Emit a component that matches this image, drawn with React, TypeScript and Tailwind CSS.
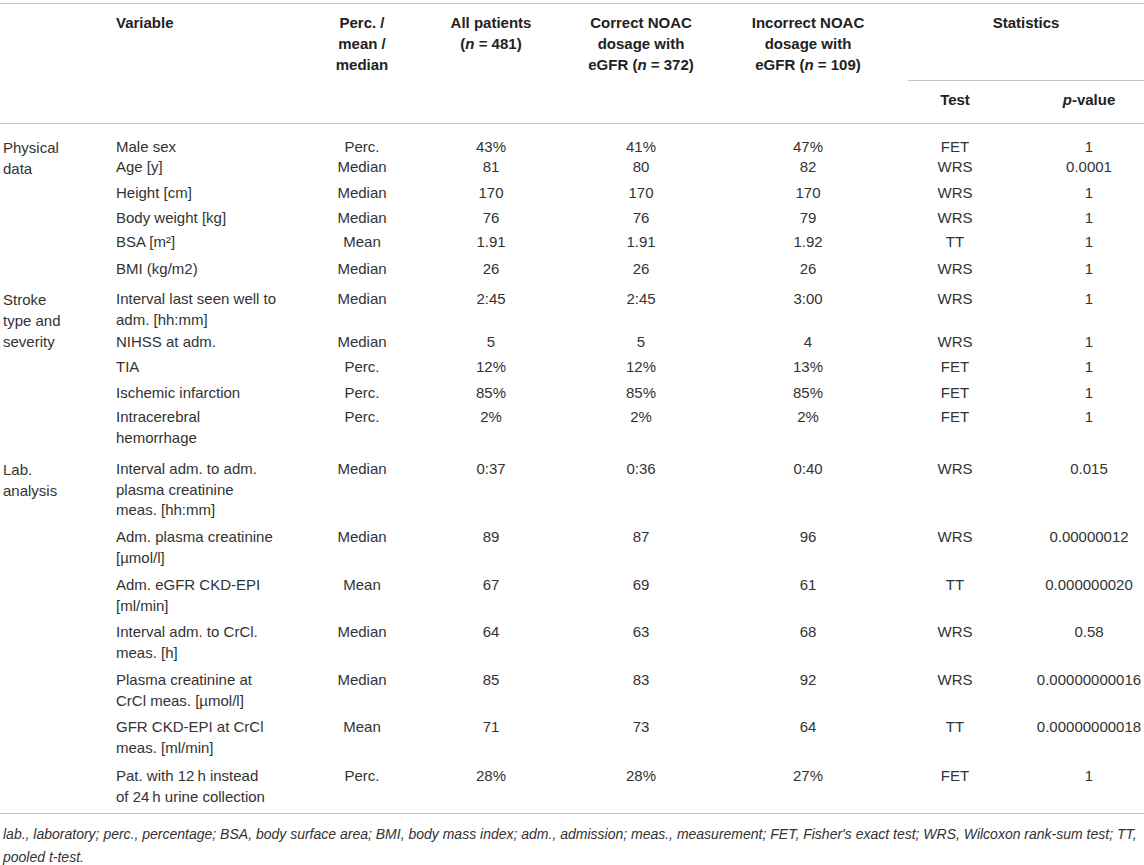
type Row = {
  name: string[];
  kind: string;
  all: string;
  correct: string;
  incorrect: string;
  test: string;
  p: string;
  h: string;
};

type Group = { label: string[]; rows: Row[] };

const groups: Group[] = [
  {
    label: ['Physical', 'data'],
    rows: [
      { name: ['Male sex'], kind: 'Perc.', all: '43%', correct: '41%', incorrect: '47%', test: 'FET', p: '1', h: 'h-[20px]' },
      { name: ['Age [y]'], kind: 'Median', all: '81', correct: '80', incorrect: '82', test: 'WRS', p: '0.0001', h: 'h-[26px]' },
      { name: ['Height [cm]'], kind: 'Median', all: '170', correct: '170', incorrect: '170', test: 'WRS', p: '1', h: 'h-[25px]' },
      { name: ['Body weight [kg]'], kind: 'Median', all: '76', correct: '76', incorrect: '79', test: 'WRS', p: '1', h: 'h-[24px]' },
      { name: ['BSA [m²]'], kind: 'Mean', all: '1.91', correct: '1.91', incorrect: '1.92', test: 'TT', p: '1', h: 'h-[27px]' },
      { name: ['BMI (kg/m2)'], kind: 'Median', all: '26', correct: '26', incorrect: '26', test: 'WRS', p: '1', h: 'h-[30px]' },
    ],
  },
  {
    label: ['Stroke', 'type and', 'severity'],
    rows: [
      { name: ['Interval last seen well to', 'adm. [hh:mm]'], kind: 'Median', all: '2:45', correct: '2:45', incorrect: '3:00', test: 'WRS', p: '1', h: 'h-[43px]' },
      { name: ['NIHSS at adm.'], kind: 'Median', all: '5', correct: '5', incorrect: '4', test: 'WRS', p: '1', h: 'h-[25px]' },
      { name: ['TIA'], kind: 'Perc.', all: '12%', correct: '12%', incorrect: '13%', test: 'FET', p: '1', h: 'h-[26px]' },
      { name: ['Ischemic infarction'], kind: 'Perc.', all: '85%', correct: '85%', incorrect: '85%', test: 'FET', p: '1', h: 'h-[24px]' },
      { name: ['Intracerebral', 'hemorrhage'], kind: 'Perc.', all: '2%', correct: '2%', incorrect: '2%', test: 'FET', p: '1', h: 'h-[52px]' },
    ],
  },
  {
    label: ['Lab.', 'analysis'],
    rows: [
      { name: ['Interval adm. to adm.', 'plasma creatinine', 'meas. [hh:mm]'], kind: 'Median', all: '0:37', correct: '0:36', incorrect: '0:40', test: 'WRS', p: '0.015', h: 'h-[68px]' },
      { name: ['Adm. plasma creatinine', '[µmol/l]'], kind: 'Median', all: '89', correct: '87', incorrect: '96', test: 'WRS', p: '0.00000012', h: 'h-[48px]' },
      { name: ['Adm. eGFR CKD-EPI', '[ml/min]'], kind: 'Mean', all: '67', correct: '69', incorrect: '61', test: 'TT', p: '0.000000020', h: 'h-[47px]' },
      { name: ['Interval adm. to CrCl.', 'meas. [h]'], kind: 'Median', all: '64', correct: '63', incorrect: '68', test: 'WRS', p: '0.58', h: 'h-[48px]' },
      { name: ['Plasma creatinine at', 'CrCl meas. [µmol/l]'], kind: 'Median', all: '85', correct: '83', incorrect: '92', test: 'WRS', p: '0.00000000016', h: 'h-[47px]' },
      { name: ['GFR CKD-EPI at CrCl', 'meas. [ml/min]'], kind: 'Mean', all: '71', correct: '73', incorrect: '64', test: 'TT', p: '0.00000000018', h: 'h-[49px]' },
      { name: ['Pat. with 12\u2009h instead', 'of 24\u2009h urine collection'], kind: 'Perc.', all: '28%', correct: '28%', incorrect: '27%', test: 'FET', p: '1', h: 'h-[47px]' },
    ],
  },
];

// column widths: variable 187, perc 124, all 134, correct 166, incorrect 168, test 126, p 142
const rowCols = 'grid grid-cols-[187px_124px_134px_166px_168px_126px_142px]';

function Lines({ lines }: { lines: string[] }) {
  return (
    <>
      {lines.map((line) => (
        <div key={line} className="whitespace-nowrap">
          {line}
        </div>
      ))}
    </>
  );
}

function Header() {
  return (
    <div className="flex border-b border-[#c4c4c4] font-bold leading-[21px] text-[#222]">
      <div className="w-[113px] shrink-0" />
      <div className="grid h-[119px] grid-cols-[187px_124px_134px_166px_168px] pt-[8px]">
        <div className="pl-[3px]">Variable</div>
        <div className="text-center">
          <Lines lines={['Perc. /', 'mean /', 'median']} />
        </div>
        <div className="text-center">
          <div>All patients</div>
          <div>
            (<span className="italic">n</span> = 481)
          </div>
        </div>
        <div className="text-center">
          <div>Correct NOAC</div>
          <div>dosage with</div>
          <div>
            eGFR (<span className="italic">n</span> = 372)
          </div>
        </div>
        <div className="text-center">
          <div>Incorrect NOAC</div>
          <div>dosage with</div>
          <div>
            eGFR (<span className="italic">n</span> = 109)
          </div>
        </div>
      </div>
      <div className="flex w-[268px] shrink-0 flex-col">
        <div className="h-[76px] pt-[8px] text-center">Statistics</div>
        <div className="ml-[16px] border-t border-[#c4c4c4]" />
        <div className="grid h-[42px] grid-cols-[126px_142px] pt-[8px] text-center">
          <div>Test</div>
          <div>
            <span className="italic">p</span>-value
          </div>
        </div>
      </div>
    </div>
  );
}

function GroupBlock({ group }: { group: Group }) {
  return (
    <div className="flex">
      <div className="w-[113px] shrink-0 pl-[3px] leading-[21px]">
        <Lines lines={group.label} />
      </div>
      <div className="flex flex-col">
        {group.rows.map((row) => (
          <div key={row.name.join(' ')} className={`${rowCols} ${row.h}`}>
            <div className="pl-[3px]">
              <Lines lines={row.name} />
            </div>
            <div className="text-center">{row.kind}</div>
            <div className="text-center">{row.all}</div>
            <div className="text-center">{row.correct}</div>
            <div className="text-center">{row.incorrect}</div>
            <div className="text-center">{row.test}</div>
            <div className="text-center">{row.p}</div>
          </div>
        ))}
      </div>
    </div>
  );
}

export default function App() {
  return (
    <div className="h-[865px] w-[1144px] overflow-hidden bg-white pt-[3px] font-['Liberation_Sans',Arial,sans-serif] text-[15px] text-[#333]">
      <div className="w-[1160px] border-t border-[#c4c4c4]">
        <Header />
        <div className="border-b border-[#c4c4c4] pt-[13px] leading-[20.5px]">
          {groups.map((group) => (
            <GroupBlock key={group.label.join(' ')} group={group} />
          ))}
        </div>
        <div className="pl-[3px] pt-[9px] text-[14px] italic leading-[23px] text-[#333]">
          <div className="whitespace-nowrap">
            lab., laboratory; perc., percentage; BSA, body surface area; BMI, body mass index; adm., admission; meas.,
            measurement; FET, Fisher's exact test; WRS, Wilcoxon rank-sum test; TT,
          </div>
          <div>pooled t-test.</div>
        </div>
      </div>
    </div>
  );
}
